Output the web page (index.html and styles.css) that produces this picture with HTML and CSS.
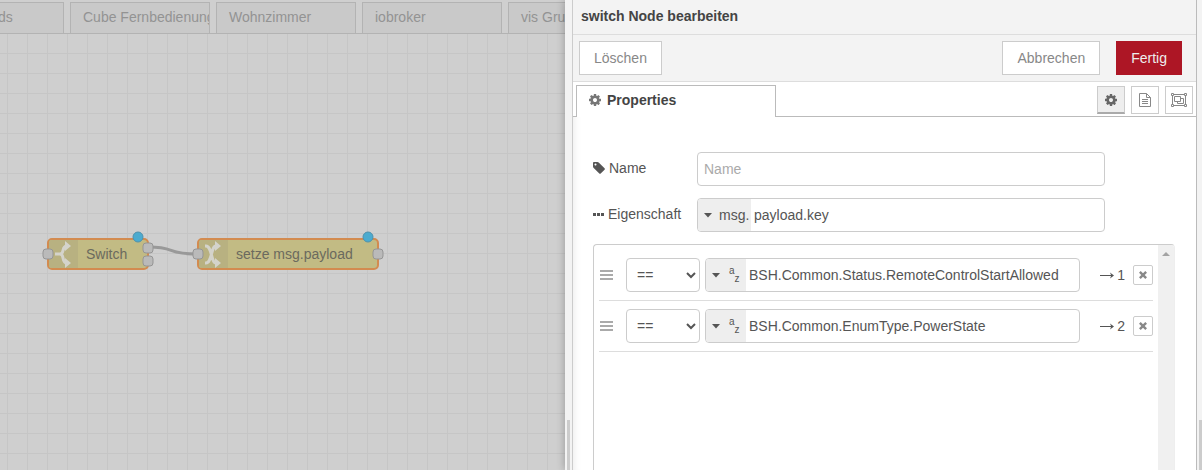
FILE: index.html
```
<!DOCTYPE html>
<html lang="de">
<head>
    <meta charset="UTF-8">
    <meta name="viewport" content="width=device-width, initial-scale=1.0">
    <title>Node-RED</title>
    <link rel="stylesheet" href="styles.css">
</head>
<body>
    <!-- Shared icons -->
    <svg class="icon-defs" width="0" height="0" aria-hidden="true">
        <symbol id="icon-cog" viewBox="0 128 1536 1536">
            <path d="M1024 896q0-106-75-181t-181-75-181 75-75 181 75 181 181 75 181-75 75-181zm512-109v222q0 12-8 23t-20 13l-185 28q-19 54-39 91 35 50 107 138 10 12 10 25t-9 23q-27 37-99 108t-94 71q-12 0-26-9l-138-108q-44 23-91 38-16 136-29 186-7 28-36 28h-222q-14 0-24.500-8.500t-11.500-21.500l-28-184q-49-16-90-37l-141 107q-10 9-25 9-14 0-25-11-126-114-165-168-7-10-7-23 0-12 8-23 15-21 51-66.500t54-70.500q-27-50-41-99l-183-27q-13-2-21-12.500t-8-23.500v-222q0-12 8-23t19-13l186-28q14-46 39-92-40-57-107-138-10-12-10-24 0-10 9-23 26-36 98.500-107.500t94.500-71.500q13 0 26 10l138 107q44-23 91-38 16-136 29-186 7-28 36-28h222q14 0 24.500 8.500t11.500 21.500l28 184q49 16 90 37l142-107q9-9 24-9 13 0 25 10 129 119 165 170 7 8 7 22 0 12-8 23-15 21-51 66.500t-54 70.500q26 50 41 98l183 28q13 2 21 12.500t8 23.500z"/>
        </symbol>
        <symbol id="icon-tag" viewBox="-64 128 1536 1536">
            <path d="M384 448q0-53-37.500-90.500t-90.500-37.500-90.500 37.500-37.500 90.500 37.500 90.500 90.500 37.500 90.500-37.500 37.500-90.500zm1067 576q0 53-37 90l-491 492q-39 37-91 37-53 0-90-37l-715-716q-38-37-64.500-101t-26.500-117v-416q0-52 38-90t90-38h416q53 0 117 26.500t102 64.500l715 714q37 39 37 91z"/>
        </symbol>
        <symbol id="icon-bars" viewBox="0 0 13 11">
            <path d="M0 0h13v2H0zM0 4h13v2H0zM0 8h13v2H0z"/>
        </symbol>
        <symbol id="icon-times" viewBox="0 0 8 8">
            <path d="M1.700 0L4 2.200 6.300 0 8 1.700 5.700 4 8 6.300 6.300 8 4 5.800 1.700 8 0 6.300 2.300 4 0 1.700z"/>
        </symbol>
        <symbol id="icon-caret" viewBox="0 0 8 5">
            <path d="M0 0h8L4 4.500z"/>
        </symbol>
        <symbol id="icon-arrow" viewBox="0 0 14 7">
            <path d="M0 3h11L10 .5 14 3.500 10 6.500 11 4H0z"/>
        </symbol>
    </svg>

    <main class="workspace">
        <nav class="workspace-tabs">
            <a class="workspace-tab workspace-tab-first" href="#">ds</a>
            <a class="workspace-tab" href="#">Cube Fernbedienung</a>
            <a class="workspace-tab" href="#">Wohnzimmer</a>
            <a class="workspace-tab" href="#">iobroker</a>
            <a class="workspace-tab" href="#">vis Gru</a>
        </nav>
        <svg class="chart" aria-label="Flow">
            <defs>
                <pattern id="grid" x="7" y="19" width="20" height="20" patternUnits="userSpaceOnUse">
                    <path class="grid-line" d="M.5 0v20M0 .5h20"/>
                </pattern>
            </defs>
            <rect width="100%" height="100%" fill="url(#grid)"/>

            <path class="wire" d="M148 213C178 213 164 220 198 220"/>

            <!-- switch node -->
            <g class="node" transform="translate(48 205)">
                <rect class="node-body" width="100" height="30" rx="4"/>
                <path class="node-icon-bg" d="M1 3q0-2 2-2h27v28H3q-2 0-2-2z"/>
                <path class="node-icon" d="M7 15h6M12 15C17 15 13 7 19 7M12 15C17 15 13 24 19 24"/>
                <path class="node-arrow" d="M17 2l6 5-6 5zM17 19l6 5-6 5z"/>
                <text class="node-label" x="38" y="20">Switch</text>
                <rect class="port" x="-5" y="10" width="10" height="10" rx="3"/>
                <rect class="port" x="95" y="4" width="10" height="10" rx="3"/>
                <rect class="port" x="95" y="17" width="10" height="10" rx="3"/>
                <circle class="changed" cx="90" cy="-2" r="5"/>
            </g>

            <!-- change node -->
            <g class="node" transform="translate(198 205)">
                <rect class="node-body" width="180" height="30" rx="4"/>
                <path class="node-icon-bg" d="M1 3q0-2 2-2h27v28H3q-2 0-2-2z"/>
                <path class="node-icon" d="M7 7h1C14 7 13 24 18 24h1M7 24h1C14 24 13 7 18 7h1"/>
                <path class="node-arrow" d="M17 2l6 5-6 5zM17 19l6 5-6 5z"/>
                <text class="node-label" x="38" y="20">setze msg.payload</text>
                <rect class="port" x="-5" y="10" width="10" height="10" rx="3"/>
                <rect class="port" x="175" y="10" width="10" height="10" rx="3"/>
                <circle class="changed" cx="170" cy="-2" r="5"/>
            </g>
        </svg>
    </main>

    <div class="grip grip-tray"></div>

    <section class="tray">
        <header class="tray-header">switch Node bearbeiten</header>
        <div class="tray-toolbar">
            <button class="btn btn-delete" type="button">Löschen</button>
            <button class="btn" type="button">Abbrechen</button>
            <button class="btn btn-primary" type="button">Fertig</button>
        </div>

        <div class="editor-tabs">
            <a class="editor-tab" href="#">
                <svg class="icon"><use href="#icon-cog"/></svg>Properties
            </a>
            <div class="editor-tab-buttons">
                <button class="tab-button selected" type="button" aria-label="Properties">
                    <svg class="icon"><use href="#icon-cog"/></svg>
                </button>
                <button class="tab-button" type="button" aria-label="Description">
                    <svg width="12" height="14" viewBox="0 0 12 14" class="line-icon">
                        <path d="M.5.5h7l4 4v9H.5zM7.500.5v4h4M3 6.500h6M3 8.500h6M3 10.500h6"/>
                    </svg>
                </button>
                <button class="tab-button" type="button" aria-label="Appearance">
                    <svg width="16" height="14" viewBox="0 0 16 14" class="line-icon">
                        <path d="M2.500 1.500h11M2.500 12.500h11M1.500 2.500v9M14.500 2.500v9M.5.5h2v2h-2zM13.500.5h2v2h-2zM.5 11.500h2v2h-2zM13.500 11.500h2v2h-2zM3.500 3.500h6v5h-6zM9.500 5.500h3v5h-6v-2"/>
                    </svg>
                </button>
            </div>
        </div>

        <form class="edit-form">
            <div class="form-row">
                <label for="node-name"><svg class="icon"><use href="#icon-tag"/></svg>Name</label>
                <input class="field" type="text" id="node-name" placeholder="Name">
            </div>
            <div class="form-row">
                <label for="node-property"><svg class="icon-dots" viewBox="0 0 11 3"><path d="M0 0h3v3H0zM4 0h3v3H4zM8 0h3v3H8z"/></svg>Eigenschaft</label>
                <div class="field typed-input">
                    <button class="type-select" type="button">
                        <svg class="caret"><use href="#icon-caret"/></svg><span>msg.</span>
                    </button>
                    <input type="text" id="node-property" value="payload.key">
                </div>
            </div>

            <div class="rules">
                <ol class="rule-list">
                    <li class="rule">
                        <svg class="handle"><use href="#icon-bars"/></svg>
                        <select class="operator" aria-label="Operator 1"><option>==</option></select>
                        <div class="field typed-input">
                            <button class="type-select type-string" type="button" aria-label="string">
                                <svg class="caret"><use href="#icon-caret"/></svg>
                                <span class="string-icon"><span>a</span><span>z</span></span>
                            </button>
                            <input type="text" aria-label="Wert 1" value="BSH.Common.Status.RemoteControlStartAllowed">
                        </div>
                        <span class="output"><svg class="arrow"><use href="#icon-arrow"/></svg>1</span>
                        <button class="remove" type="button" aria-label="Regel 1 löschen"><svg><use href="#icon-times"/></svg></button>
                    </li>
                    <li class="rule">
                        <svg class="handle"><use href="#icon-bars"/></svg>
                        <select class="operator" aria-label="Operator 2"><option>==</option></select>
                        <div class="field typed-input">
                            <button class="type-select type-string" type="button" aria-label="string">
                                <svg class="caret"><use href="#icon-caret"/></svg>
                                <span class="string-icon"><span>a</span><span>z</span></span>
                            </button>
                            <input type="text" aria-label="Wert 2" value="BSH.Common.EnumType.PowerState">
                        </div>
                        <span class="output"><svg class="arrow"><use href="#icon-arrow"/></svg>2</span>
                        <button class="remove" type="button" aria-label="Regel 2 löschen"><svg><use href="#icon-times"/></svg></button>
                    </li>
                </ol>
                <div class="scroll-track">
                    <svg width="8" height="4" viewBox="0 0 8 4"><path d="M0 4l4-4 4 4z"/></svg>
                </div>
            </div>
        </form>
    </section>

    <div class="grip grip-sidebar"></div>
</body>
</html>
```
FILE: styles.css
```
* {
    box-sizing: border-box;
}

body {
    margin: 0;
    height: 100vh;
    display: flex;
    overflow: hidden;
    font-family: "Liberation Sans", Arial, sans-serif;
    font-size: 14px;
    line-height: 20px;
    color: #555;
    background: #f3f3f3;
}

button,
input,
select {
    font: inherit;
    color: inherit;
}

svg {
    flex: none;
    fill: currentColor;
}

.icon-defs {
    position: absolute;
}

.icon {
    width: 12px;
    height: 12px;
}

/* Workspace */
.workspace {
    flex: 1;
    min-width: 0;
    display: flex;
    flex-direction: column;
    background: #cfcfcf;
}

.workspace-tabs {
    display: flex;
    gap: 6px;
    height: 34px;
    padding-top: 2px;
    overflow: hidden;
    border-bottom: 1px solid #b3b3b3;
}

.workspace-tab {
    flex: none;
    width: 140px;
    padding: 4px 0 0 12px;
    overflow: hidden;
    white-space: nowrap;
    text-decoration: none;
    color: #939393;
    background: #c9c9c9;
    border: 1px solid #b3b3b3;
    border-bottom: 0;
}

/* scrolled half out of view */
.workspace-tab-first {
    width: 66px;
    margin-left: -2px;
    padding-left: 0;
    border-left: 0;
}

.chart {
    flex: 1;
    width: 100%;
    min-height: 0;
}

.grid-line {
    fill: none;
    stroke: #c6c6c6;
}

.wire {
    fill: none;
    stroke: #999;
    stroke-width: 3;
}

.node-body {
    fill: #c2bb84;
    stroke: #d38b50;
    stroke-width: 2;
}

.node-icon-bg {
    fill: #b8b181;
}

.node-icon {
    fill: none;
    stroke: #d4d3cb;
    stroke-width: 3;
}

.node-arrow {
    fill: #d4d3cb;
}

.node-label {
    fill: #6b6a5e;
}

.port {
    fill: #bababa;
    stroke: #959595;
}

.changed {
    fill: #4cabcf;
    stroke: #4f91ac;
}

/* Separators */
.grip {
    flex: none;
    display: flex;
    align-items: flex-end;
    background: #f3f3f3;
}

.grip::after {
    content: "";
    width: 3px;
    height: 50px;
    background: #ccc;
}

.grip-tray {
    width: 7px;
    padding-left: 2px;
    z-index: 1;
    box-shadow: 0 0 8px rgba(0, 0, 0, 0.3);
}

.grip-sidebar {
    width: 5px;
    padding-left: 2px;
}

/* Edit tray */
.tray {
    flex: none;
    width: 625px;
    display: flex;
    flex-direction: column;
    position: relative;
    z-index: 2;
    background: #fff;
    border-left: 1px solid #ccc;
    border-right: 1px solid #bbb;
}

.tray-header {
    height: 35px;
    padding: 6px 8px;
    font-weight: bold;
    color: #444;
    background: #f3f3f3;
    border-bottom: 1px solid #ddd;
}

.tray-toolbar {
    display: flex;
    align-items: center;
    gap: 16px;
    height: 47px;
    padding: 0 14px 0 6px;
    background: #f3f3f3;
    border-bottom: 1px solid #ddd;
}

.btn {
    height: 34px;
    padding: 0 14px;
    color: #888;
    background: #fff;
    border: 1px solid #ccc;
}

.btn-delete {
    margin-right: auto;
}

.btn-primary {
    color: #eee;
    background: #ad1625;
    border-color: #ad1625;
}

.editor-tabs {
    display: flex;
    justify-content: space-between;
    height: 35px;
    padding: 3px 3px 0;
    background: linear-gradient(#bbb, #bbb) bottom / 100% 1px no-repeat;
}

.editor-tab {
    display: flex;
    align-items: center;
    gap: 6px;
    width: 200px;
    padding: 0 12px 4px;
    font-weight: bold;
    text-decoration: none;
    color: #444;
    background: #fff;
    border: 1px solid #bbb;
    border-bottom: 0;
}

.editor-tab .icon {
    color: #777;
}

.editor-tab-buttons {
    display: flex;
    gap: 6px;
    padding-top: 1px;
}

.tab-button {
    display: flex;
    align-items: center;
    justify-content: center;
    width: 28px;
    height: 28px;
    padding: 0;
    color: #888;
    background: #fff;
    border: 1px solid #ccc;
}

.tab-button.selected {
    color: #666;
    background: #eee;
    border-bottom: 2px solid #aaa;
}

.line-icon {
    fill: none;
    stroke: currentColor;
}

/* Form */
.edit-form {
    flex: 1;
    min-height: 0;
    display: flex;
    flex-direction: column;
    gap: 12px;
    padding: 35px 21px 0 20px;
    box-shadow: inset 8px 0 8px -8px rgba(0, 0, 0, 0.1);
}

.form-row {
    display: flex;
    padding-right: 70px;
}

.form-row label {
    display: flex;
    align-items: center;
    gap: 4px;
    width: 104px;
    height: 32px;
}

.icon-dots {
    width: 11px;
    height: 3px;
}

.field {
    flex: 1;
    min-width: 0;
    height: 34px;
    padding: 0 6px;
    background: #fff;
    border: 1px solid #ccc;
    border-radius: 4px;
}

.field::placeholder {
    color: #aaa;
}

.typed-input {
    display: flex;
    padding: 0;
    overflow: hidden;
}

.typed-input input {
    flex: 1;
    min-width: 0;
    padding: 0 3px;
    background: none;
    border: 0;
}

.type-select {
    display: flex;
    align-items: center;
    gap: 7px;
    width: 53px;
    padding: 0 0 0 6px;
    background: #eee;
    border: 0;
}

.type-string {
    width: 40px;
    gap: 9px;
}

.caret {
    width: 8px;
    height: 5px;
}

/* small "a" with a "z" stepped down beside it */
.string-icon {
    display: flex;
    font-size: 10px;
    line-height: 8px;
}

.string-icon span {
    padding-bottom: 8px;
}

.string-icon span + span {
    padding: 8px 0 0;
}

/* Rules */
.rules {
    flex: 1;
    min-height: 0;
    display: flex;
    border: 1px solid #ccc;
    border-bottom: 0;
    border-right-color: #eee;
    border-radius: 4px 4px 0 0;
    overflow: hidden;
}

.rule-list {
    flex: 1;
    min-width: 0;
    margin: 0;
    padding: 5px;
    list-style: none;
}

.rule {
    display: flex;
    align-items: center;
    height: 51px;
    padding-left: 1px;
    border-bottom: 1px solid #ddd;
}

.handle {
    width: 13px;
    height: 11px;
    margin-right: 13px;
    color: #aaa;
}

.operator {
    width: 74px;
    height: 34px;
    margin-right: 5px;
    padding: 4px 6px;
    background: #fff;
    border: 1px solid #ccc;
    border-radius: 4px;
}

.output {
    display: flex;
    align-items: center;
    gap: 3px;
    margin: 0 8px 0 20px;
}

.arrow {
    width: 14px;
    height: 7px;
}

.remove {
    display: flex;
    align-items: center;
    justify-content: center;
    width: 20px;
    height: 20px;
    padding: 0;
    color: #888;
    background: #fff;
    border: 1px solid #ccc;
    border-radius: 2px;
}

.remove svg {
    width: 8px;
    height: 8px;
}

.scroll-track {
    display: flex;
    justify-content: center;
    width: 16px;
    padding-top: 7px;
    color: #a3a3a3;
    background: #f0f0f0;
}
```
